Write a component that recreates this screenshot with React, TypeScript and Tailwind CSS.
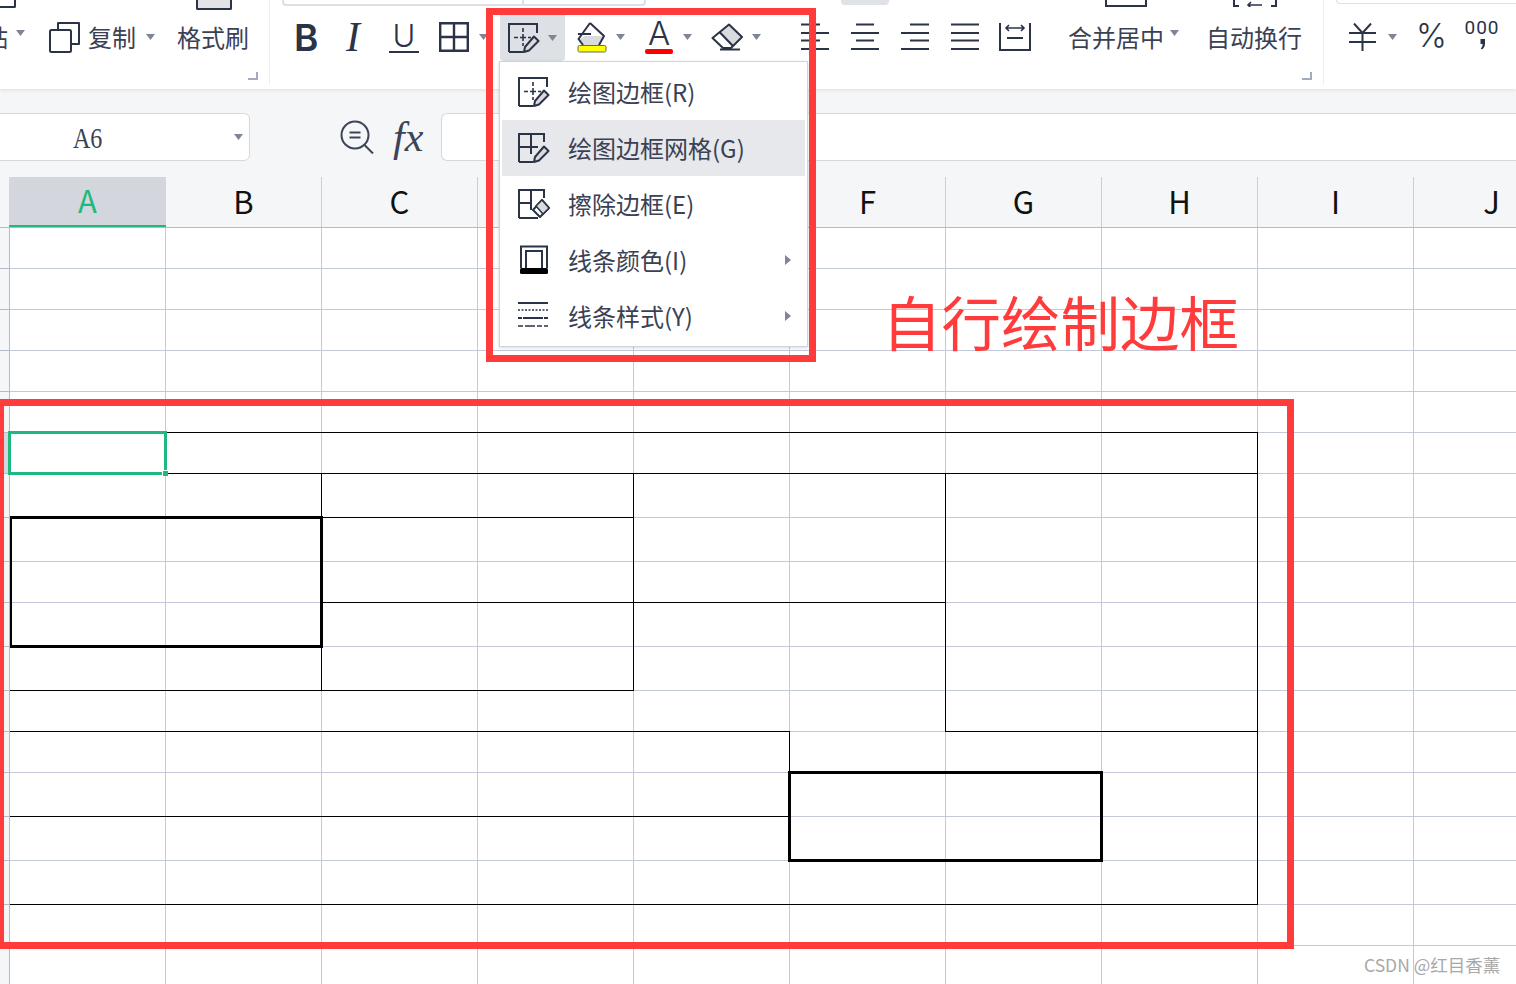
import React from "react";

const INK = "#2b3346";
const GREY = "#d9dbde";

function Caret({ className = "" }: { className?: string }) {
  return (
    <svg width="9" height="6" viewBox="0 0 9 6" className={`shrink-0 ${className}`}>
      <path d="M0 0H9L4.5 6Z" fill="#7d8596" />
    </svg>
  );
}

function Launcher() {
  return <div className="w-[10px] h-[8px] border-r-2 border-b-2 border-[#a3aabb]" />;
}

function Pencil({ fill = GREY }: { fill?: string }) {
  return (
    <g stroke={INK} strokeWidth="2" strokeLinejoin="round" fill="none">
      <path d="M26 13.5 L30.5 18 L21 27.5 L16 29 L17 24 Z" fill={fill} />
    </g>
  );
}

function DrawBorderIcon({ className = "" }: { className?: string }) {
  return (
    <svg width="32" height="30" viewBox="0 0 32 30" className={`shrink-0 ${className}`}>
      <path d="M1 29V1H29V10M1 29H15" fill="none" stroke={INK} strokeWidth="2" />
      <path d="M6 14.5H10M12 14.5H18M20 14.5H23M15 5V9M15 11V18M15 20V23" fill="none" stroke={INK} strokeWidth="1.6" />
      <Pencil />
    </svg>
  );
}

function GridPencilIcon() {
  return (
    <svg width="32" height="30" viewBox="0 0 32 30" className="shrink-0">
      <path d="M1 29V1H26V9M1 14H20M13 1V21M1 29H15" fill="none" stroke={INK} strokeWidth="2" />
      <Pencil />
    </svg>
  );
}

function GridEraseIcon() {
  return (
    <svg width="32" height="30" viewBox="0 0 32 30" className="shrink-0">
      <path d="M1 29V1H26V9M1 14H14M13 1V21M1 29H20" fill="none" stroke={INK} strokeWidth="2" />
      <path d="M24 11 L31 19 L22 28 L15 21 Z" fill="#fff" stroke={INK} strokeWidth="2" strokeLinejoin="round" />
      <path d="M24 11 L31 19 L25 25 L18 17 Z" fill={GREY} stroke={INK} strokeWidth="1.5" strokeLinejoin="round" />
    </svg>
  );
}

function LineColorIcon() {
  return (
    <svg width="32" height="30" viewBox="0 0 32 30" className="shrink-0">
      <path d="M3 23V1.5H29V23" fill="none" stroke={INK} strokeWidth="2" />
      <path d="M8 23V6H24V23" fill="none" stroke={INK} strokeWidth="2" />
      <rect x="2" y="23" width="28" height="6" rx="1.5" fill="#000" />
    </svg>
  );
}

function LineStyleIcon() {
  return (
    <svg width="32" height="30" viewBox="0 0 32 30" className="shrink-0">
      <path d="M0 2H30" stroke={INK} strokeWidth="2" />
      <path d="M0 9H30" stroke={INK} strokeWidth="1.5" strokeDasharray="2 1.5" />
      <path d="M0 17H30" stroke={INK} strokeWidth="2" strokeDasharray="4 1 20 1 4" />
      <path d="M0 25H30" stroke={INK} strokeWidth="1.5" strokeDasharray="5 2 10 2 5 2" />
    </svg>
  );
}

function MenuItem({ icon, label, arrow, active }: { icon: React.ReactNode; label: string; arrow?: boolean; active?: boolean }) {
  return (
    <div className={`flex items-center h-[56px] mx-[2px] ${active ? "bg-[#e6e8ec]" : ""}`}>
      <div className="ml-[16px] w-[50px] shrink-0">{icon}</div>
      <span className="text-[24px] leading-none text-[#3a4154] whitespace-nowrap">{label}</span>
      {arrow && (
        <svg width="6" height="10" viewBox="0 0 6 10" className="ml-auto mr-[14px] shrink-0">
          <path d="M0 0L6 5L0 10Z" fill="#7d8596" />
        </svg>
      )}
    </div>
  );
}

function AlignIcon({ kind }: { kind: "left" | "center" | "right" | "full" }) {
  const short =
    kind === "left" ? "M0 1.5H19M0 17.5H19" : kind === "center" ? "M5 1.5H23M5 17.5H23" : kind === "right" ? "M9 1.5H28M9 17.5H28" : "M0 1.5H28M0 17.5H28";
  return (
    <svg width="28" height="28" viewBox="0 0 28 28" className="shrink-0">
      <path d={short} stroke={INK} strokeWidth="2" fill="none" />
      <path d="M0 10H28M0 26H28" stroke={INK} strokeWidth="2" fill="none" />
    </svg>
  );
}

const rowHeights = [41, 41, 41, 41, 41, 41, 44, 44, 41, 44, 44, 41, 41, 44, 44, 44, 41, 41];
const colLetters = ["B", "C", "D", "E", "F", "G", "H", "I", "J"];
const colIndex = [0, 1, 2, 3, 4, 5, 6, 7, 8, 9];

// x, y, w, h in page pixels: the borders drawn on the sheet
const thin: [number, number, number, number][] = [
  [167, 432, 1091, 1],
  [1257, 432, 1, 473],
  [167, 473, 1091, 1],
  [10, 473, 154, 1],
  [321, 473, 1, 217],
  [633, 473, 1, 218],
  [321, 517, 313, 1],
  [321, 602, 625, 1],
  [945, 473, 1, 259],
  [10, 690, 624, 1],
  [10, 731, 780, 1],
  [945, 731, 313, 1],
  [789, 731, 1, 42],
  [10, 816, 780, 1],
  [10, 904, 1248, 1],
];
const thick: [number, number, number, number][] = [
  [10, 516, 313, 3],
  [10, 516, 2, 132],
  [320, 516, 3, 132],
  [10, 645, 313, 3],
  [788, 771, 315, 3],
  [788, 771, 3, 91],
  [1100, 771, 3, 91],
  [788, 859, 315, 3],
];

export default function App() {
  return (
    <div className="relative w-[1516px] h-[984px] overflow-hidden bg-white font-['Noto_Sans_CJK_SC','Noto_Sans',sans-serif] text-[#3a4154]">
      {/* Ribbon */}
      <div className="relative z-10 flex h-[89px] bg-white shadow-[0_1px_4px_rgba(0,0,0,0.10)]">
        {/* clipboard group */}
        <div className="flex flex-col w-[270px] h-[85px] shrink-0 border-r border-[#eceef1]">
          <div className="flex h-[10px] shrink-0">
            <div className="w-[16px] h-[8px] border-r-2 border-b-2 border-[#2b3346] rounded-br-[2px]" />
            <div className="ml-[180px] w-[36px] h-[10px] bg-[#e3e4e6] border-x-2 border-b-2 border-[#2b3346] rounded-b-[2px]" />
          </div>
          <div className="flex items-center h-[54px] shrink-0">
            <span className="-ml-[16px] text-[24px] leading-none whitespace-nowrap">贴</span>
            <Caret className="ml-[8px] -mt-[8px]" />
            <svg width="31" height="32" viewBox="0 0 31 32" className="ml-[24px] shrink-0">
              <path d="M9 8V2H30V23H23" fill="none" stroke={INK} strokeWidth="2" strokeLinejoin="round" />
              <rect x="1" y="9" width="21" height="22" rx="1.5" fill="#fff" stroke={INK} strokeWidth="2" />
            </svg>
            <span className="ml-[8px] text-[24px] leading-none whitespace-nowrap">复制</span>
            <Caret className="ml-[10px]" />
            <span className="ml-[22px] text-[24px] leading-none whitespace-nowrap">格式刷</span>
          </div>
          <div className="flex justify-end pr-[11px] pt-[8px]">
            <Launcher />
          </div>
        </div>

        {/* font + alignment group */}
        <div className="flex flex-col w-[1054px] h-[85px] shrink-0 border-r border-[#eceef1]">
          <div className="flex h-[10px] shrink-0">
            <div className="ml-[12px] w-[242px] h-[6px] border-x-2 border-b-2 border-[#dfe0e5] rounded-bl-[4px]" />
            <div className="w-[122px] h-[6px] border-r-2 border-b-2 border-[#dfe0e5] rounded-br-[4px]" />
            <div className="ml-[195px] w-[48px] h-[5px] bg-[#dfe2e6] rounded-b-[4px]" />
            <div className="ml-[216px] w-[42px] h-[7px] border-x-2 border-b-2 border-[#2b3346]" />
            <svg width="44" height="7" viewBox="0 0 44 7" className="ml-[86px] shrink-0">
              <path d="M1 0V6H6M38 6H43V0" fill="none" stroke={INK} strokeWidth="2" />
              <path d="M15 5H29M18 2L15 5L18 8" fill="none" stroke={INK} strokeWidth="1.6" />
            </svg>
          </div>
          <div className="flex items-center h-[54px] shrink-0">
            <span className="ml-[24px] w-[24px] text-[37px] leading-none font-semibold text-[#2b3346] font-['Inter',sans-serif]">B</span>
            <span className="ml-[28px] w-[16px] text-[42px] leading-none italic font-light text-[#2b3346] font-['Liberation_Serif',serif]">I</span>
            <div className="ml-[27px] w-[30px] flex flex-col items-center border-b-2 border-[#2b3346]">
              <span className="text-[31px] leading-[30px] font-light text-[#2b3346] font-['Inter',sans-serif]">U</span>
            </div>
            <svg width="30" height="30" viewBox="0 0 30 30" className="ml-[20px] shrink-0">
              <path d="M1.2 1.2H28.8V28.8H1.2ZM15 1V29M1 15H29" fill="none" stroke={INK} strokeWidth="2.4" />
            </svg>
            <Caret className="ml-[10px]" />
            <div className="ml-[12px] self-start mt-[5px] flex items-center w-[65px] h-[46px] bg-[#dde0e5] rounded-b-[4px] shrink-0">
              <DrawBorderIcon className="ml-[8px]" />
              <Caret className="ml-[8px]" />
            </div>
            <svg width="30" height="31" viewBox="0 0 30 31" className="ml-[12px] shrink-0">
              <path d="M7 14H23L27 15L22 23H6L2 18Z" fill={GREY} />
              <path d="M1 12H14M13 1L27 14L22 23M6 23L1.5 17L13 1" fill="none" stroke={INK} strokeWidth="2" strokeLinejoin="round" />
              <rect x="1" y="23.5" width="28" height="6.5" rx="1.5" fill="#ffff00" stroke="#6b6b50" strokeWidth="1" />
            </svg>
            <Caret className="ml-[9px]" />
            <div className="ml-[20px] w-[28px] flex flex-col items-center shrink-0">
              <span className="text-[33px] leading-[27px] font-light text-[#2b3346] font-['Inter',sans-serif]">A</span>
              <div className="w-[28px] h-[5px] bg-[#ff0000] rounded-[2px] mt-[2px]" />
            </div>
            <Caret className="ml-[10px]" />
            <svg width="32" height="28" viewBox="0 0 32 28" className="ml-[19px] shrink-0">
              <path d="M18 1.5L31 14L21 25H12L1.5 15Z" fill="#fff" />
              <path d="M18 1.5L31 14L21 24L8 10Z" fill={GREY} />
              <path d="M18 1.5L31 14L20 25H12L1.5 15ZM8.5 9L22 23" fill="none" stroke={INK} strokeWidth="2" strokeLinejoin="round" />
              <path d="M9 26.5H29" stroke={INK} strokeWidth="2" />
            </svg>
            <Caret className="ml-[9px]" />
            <div className="ml-[40px] shrink-0"><AlignIcon kind="left" /></div>
            <div className="ml-[22px] shrink-0"><AlignIcon kind="center" /></div>
            <div className="ml-[22px] shrink-0"><AlignIcon kind="right" /></div>
            <div className="ml-[22px] shrink-0"><AlignIcon kind="full" /></div>
            <svg width="32" height="28" viewBox="0 0 32 28" className="ml-[20px] shrink-0">
              <path d="M1 0V28M31 0V28M1 27H31M8 15H24" fill="none" stroke={INK} strokeWidth="2" />
              <path d="M7 5H25M10 2L7 5L10 8M22 2L25 5L22 8" fill="none" stroke={INK} strokeWidth="1.6" />
            </svg>
            <span className="ml-[37px] text-[24px] leading-none whitespace-nowrap">合并居中</span>
            <Caret className="ml-[6px] -mt-[8px]" />
            <span className="ml-[27px] text-[24px] leading-none whitespace-nowrap">自动换行</span>
          </div>
          <div className="flex justify-end pr-[11px] pt-[8px]">
            <Launcher />
          </div>
        </div>

        {/* number group */}
        <div className="flex flex-col flex-1 min-w-0 h-[85px]">
          <div className="h-[10px] shrink-0">
            <div className="ml-[12px] h-[4px] border-l border-b border-[#dfe0e5] rounded-bl-[4px]" />
          </div>
          <div className="flex items-center h-[54px] shrink-0">
            <svg width="27" height="28" viewBox="0 0 27 28" className="ml-[25px] shrink-0">
              <path d="M5 0.5L13.5 10L22 0.5M0 10H27M0 19H27M13.5 10V28" fill="none" stroke={INK} strokeWidth="2" />
            </svg>
            <Caret className="ml-[12px]" />
            <span className="ml-[19px] -mt-[4px] w-[29px] text-[33px] leading-none font-light text-[#2b3346] font-['Inter',sans-serif]">%</span>
            <div className="ml-[20px] w-[34px] flex flex-col items-center -mt-[4px]">
              <span className="text-[19px] leading-[16px] tracking-[1px] text-[#2b3346] font-['Roboto',sans-serif]">000</span>
              <svg width="7" height="12" viewBox="0 0 7 12" className="mt-[2px]">
                <path d="M1.5 1H6V5.5C6 8 5 10 3 11.5L1.8 10.5C3 9.3 3.6 8 3.6 6H1.5Z" fill={INK} />
              </svg>
            </div>
          </div>
        </div>
      </div>

      {/* Formula bar */}
      <div className="flex items-start h-[88px] pt-[24px] bg-[#f5f6f7]">
        <div className="flex items-center -ml-[1px] w-[251px] h-[48px] bg-white border border-[#d6d8de] rounded-r-[6px] shrink-0">
          <span className="ml-[73px] mt-[2px] w-[30px] origin-left scale-x-[0.8] text-[30px] leading-none text-[#3a4154] font-['Liberation_Serif',serif]">A6</span>
          <Caret className="ml-auto mr-[6px]" />
        </div>
        <svg width="34" height="34" viewBox="0 0 34 34" className="ml-[90px] mt-[7px] shrink-0">
          <circle cx="15" cy="15" r="13.5" fill="none" stroke="#3c4458" strokeWidth="2" />
          <path d="M24.5 25L33 33.5M9.5 12.5H20.5M9.5 17.5H20.5" fill="none" stroke="#3c4458" strokeWidth="2" />
        </svg>
        <span className="ml-[19px] mt-[3px] w-[48px] text-[42px] leading-[42px] italic text-[#3c4458] font-['Liberation_Serif',serif]">fx</span>
        <div className="flex-1 h-[48px] bg-white border border-r-0 border-[#d6d8de] rounded-l-[6px]" />
      </div>

      {/* Column headers */}
      <div className="flex h-[51px] bg-[#f5f6f7] border-b border-[#b4bacb] text-[#111]">
        <div className="w-[9px] shrink-0" />
        <div className="flex items-center justify-center w-[157px] pb-[3px] shrink-0 bg-[#d3d6dc] border-b-2 border-[#1fb97f] text-[#1fb97f] text-[31px] leading-none">A</div>
        {colLetters.map((c) => (
          <div key={c} className="flex items-center justify-center w-[156px] pb-[4px] shrink-0 border-r border-[#c8cddb] text-[31px] leading-none">
            {c}
          </div>
        ))}
      </div>

      {/* Sheet grid */}
      <div className="flex flex-col">
        {rowHeights.map((h, r) => (
          <div key={r} className={`flex shrink-0 ${h === 44 ? "h-[44px]" : "h-[41px]"}`}>
            <div className={`w-[10px] shrink-0 border-r border-b border-[#b4bacb] ${r === 5 ? "bg-[#d3d6dc]" : "bg-[#f5f6f7]"}`} />
            {colIndex.map((c) => (
              <div key={c} className="w-[156px] shrink-0 border-r border-b border-[#c3c9d9]" />
            ))}
          </div>
        ))}
      </div>

      {/* Borders drawn by hand on the sheet */}
      <svg width="1516" height="984" className="absolute left-0 top-0 pointer-events-none" shapeRendering="crispEdges">
        {thin.map(([x, y, w, h], i) => (
          <rect key={i} x={x} y={y} width={w} height={h} fill="#000" />
        ))}
        {thick.map(([x, y, w, h], i) => (
          <rect key={i} x={x} y={y} width={w} height={h} fill="#000" />
        ))}
      </svg>

      {/* Selected cell */}
      <div className="absolute left-[8px] top-[431px] w-[159px] h-[44px] border-[3px] border-[#1fb97f]" />
      <div className="absolute left-[162px] top-[470px] w-[6px] h-[6px] bg-[#1fb97f] border-l border-t border-white" />

      {/* Dropdown menu */}
      <div className="absolute z-20 left-[499px] top-[61px] w-[309px] h-[286px] pt-[2px] bg-white border border-[#d0d3da] shadow-[0_1px_3px_rgba(0,0,0,0.15)]">
        <MenuItem icon={<DrawBorderIcon />} label="绘图边框(R)" />
        <MenuItem icon={<GridPencilIcon />} label="绘图边框网格(G)" active />
        <MenuItem icon={<GridEraseIcon />} label="擦除边框(E)" />
        <MenuItem icon={<LineColorIcon />} label="线条颜色(I)" arrow />
        <MenuItem icon={<LineStyleIcon />} label="线条样式(Y)" arrow />
      </div>

      {/* Annotations */}
      <div className="absolute z-30 left-[486px] top-[8px] w-[330px] h-[354px] border-[7px] border-[#ff3b3b]" />
      <div className="absolute z-30 -left-[3px] top-[399px] w-[1297px] h-[550px] border-[7px] border-[#ff3b3b]" />
      <div className="absolute z-30 left-[882px] top-[285px] text-[59.5px] leading-[70px] text-[#ff3b3b] whitespace-nowrap">自行绘制边框</div>
      <div className="absolute z-30 left-[1364px] top-[952px] text-[17.5px] leading-[26px] text-[#a8a8a8] whitespace-nowrap">CSDN @红目香薰</div>
    </div>
  );
}
